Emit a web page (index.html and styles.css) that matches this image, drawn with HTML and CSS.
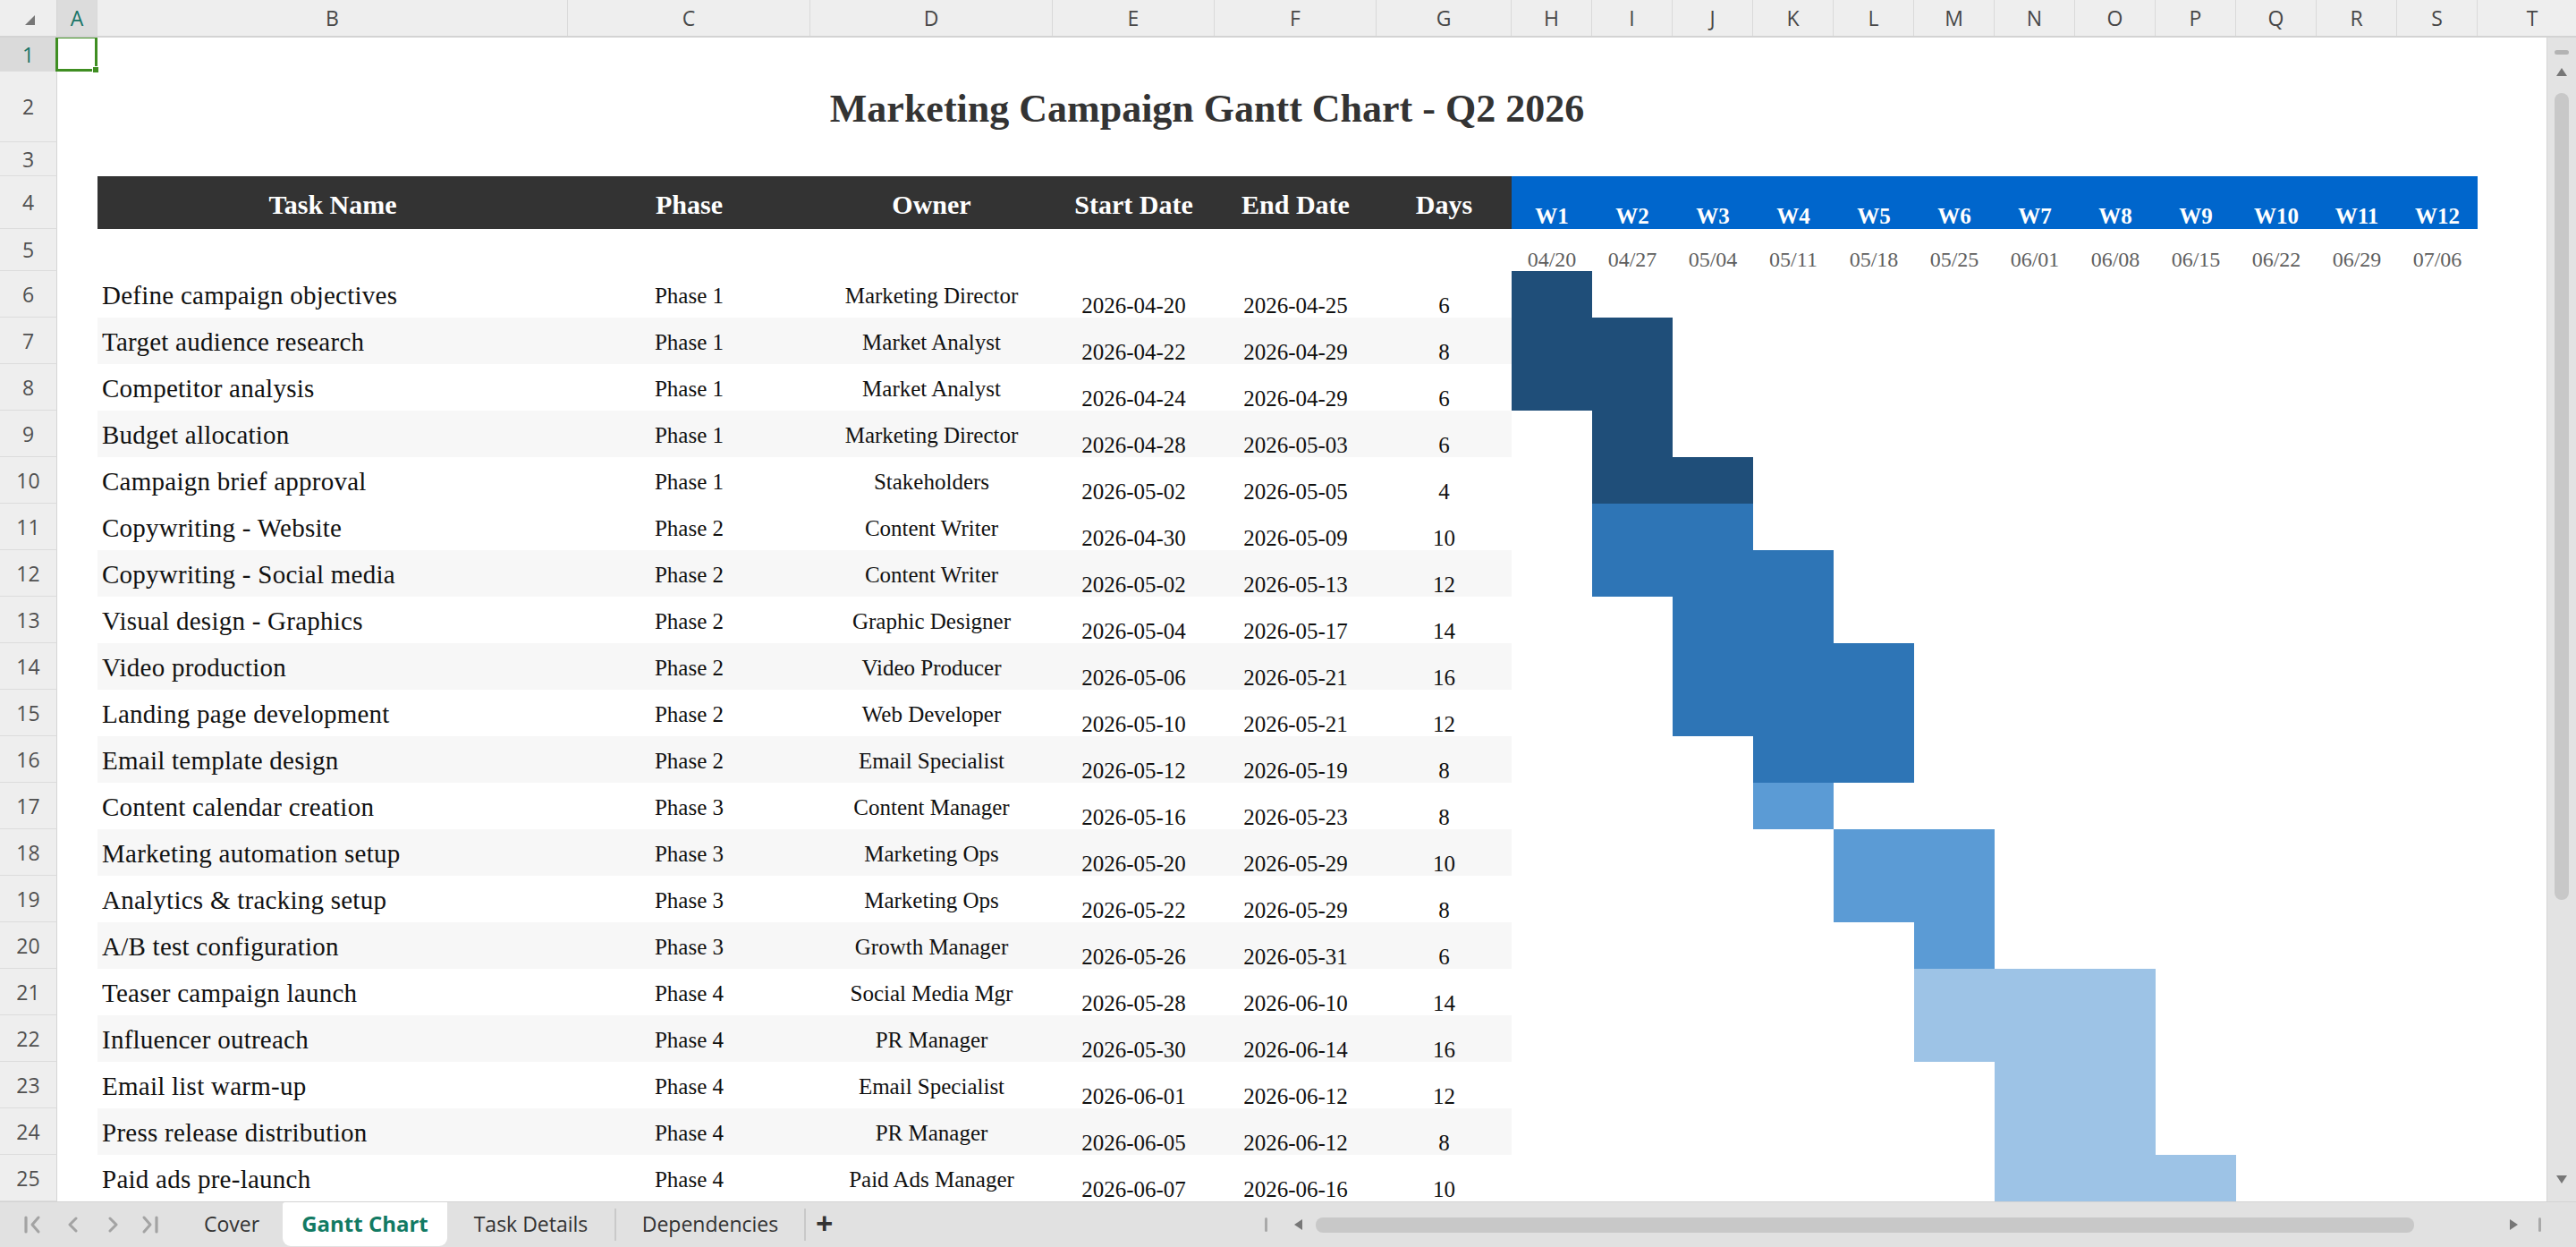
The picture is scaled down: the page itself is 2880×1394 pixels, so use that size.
FILE: index.html
```html
<!DOCTYPE html>
<html lang="en">
<head>
<meta charset="utf-8">
<title>Marketing Campaign Gantt Chart - Q2 2026</title>
<link rel="stylesheet" href="styles.css">
</head>
<body>
<div class="app">
  <div class="colhdr">
    <div class="corner"><span class="corner-tri"></span></div>
    <div class="ch active">A</div>
    <div class="ch">B</div>
    <div class="ch">C</div>
    <div class="ch">D</div>
    <div class="ch">E</div>
    <div class="ch">F</div>
    <div class="ch">G</div>
    <div class="ch">H</div>
    <div class="ch">I</div>
    <div class="ch">J</div>
    <div class="ch">K</div>
    <div class="ch">L</div>
    <div class="ch">M</div>
    <div class="ch">N</div>
    <div class="ch">O</div>
    <div class="ch">P</div>
    <div class="ch">Q</div>
    <div class="ch">R</div>
    <div class="ch">S</div>
    <div class="ch last">T</div>
  </div>

  <div class="main">
    <div class="sheet">
      <div class="row r1">
        <div class="rh active">1</div>
        <div class="sel"></div>
      </div>
      <div class="row r2">
        <div class="rh">2</div>
        <div class="title">Marketing Campaign Gantt Chart - Q2 2026</div>
      </div>
      <div class="row r3">
        <div class="rh">3</div>
      </div>
      <div class="row r4">
        <div class="rh">4</div>
        <div class="hd c3">Task Name</div>
        <div class="hd c4">Phase</div>
        <div class="hd c5">Owner</div>
        <div class="hd c6">Start Date</div>
        <div class="hd c7">End Date</div>
        <div class="hd c8">Days</div>
        <div class="wk c9">W1</div>
        <div class="wk c10">W2</div>
        <div class="wk c11">W3</div>
        <div class="wk c12">W4</div>
        <div class="wk c13">W5</div>
        <div class="wk c14">W6</div>
        <div class="wk c15">W7</div>
        <div class="wk c16">W8</div>
        <div class="wk c17">W9</div>
        <div class="wk c18">W10</div>
        <div class="wk c19">W11</div>
        <div class="wk c20">W12</div>
      </div>
      <div class="row r5">
        <div class="rh">5</div>
        <div class="wd c9">04/20</div>
        <div class="wd c10">04/27</div>
        <div class="wd c11">05/04</div>
        <div class="wd c12">05/11</div>
        <div class="wd c13">05/18</div>
        <div class="wd c14">05/25</div>
        <div class="wd c15">06/01</div>
        <div class="wd c16">06/08</div>
        <div class="wd c17">06/15</div>
        <div class="wd c18">06/22</div>
        <div class="wd c19">06/29</div>
        <div class="wd c20">07/06</div>
      </div>

      <div class="row task">
        <div class="rh">6</div>
        <div class="c name">Define campaign objectives</div>
        <div class="c phase">Phase 1</div>
        <div class="c owner">Marketing Director</div>
        <div class="c start">2026-04-20</div>
        <div class="c end">2026-04-25</div>
        <div class="c days">6</div>
        <div class="bar p1" style="grid-column: 9 / 10"></div>
      </div>
      <div class="row task alt">
        <div class="rh">7</div>
        <div class="c name">Target audience research</div>
        <div class="c phase">Phase 1</div>
        <div class="c owner">Market Analyst</div>
        <div class="c start">2026-04-22</div>
        <div class="c end">2026-04-29</div>
        <div class="c days">8</div>
        <div class="bar p1" style="grid-column: 9 / 11"></div>
      </div>
      <div class="row task">
        <div class="rh">8</div>
        <div class="c name">Competitor analysis</div>
        <div class="c phase">Phase 1</div>
        <div class="c owner">Market Analyst</div>
        <div class="c start">2026-04-24</div>
        <div class="c end">2026-04-29</div>
        <div class="c days">6</div>
        <div class="bar p1" style="grid-column: 9 / 11"></div>
      </div>
      <div class="row task alt">
        <div class="rh">9</div>
        <div class="c name">Budget allocation</div>
        <div class="c phase">Phase 1</div>
        <div class="c owner">Marketing Director</div>
        <div class="c start">2026-04-28</div>
        <div class="c end">2026-05-03</div>
        <div class="c days">6</div>
        <div class="bar p1" style="grid-column: 10 / 11"></div>
      </div>
      <div class="row task">
        <div class="rh">10</div>
        <div class="c name">Campaign brief approval</div>
        <div class="c phase">Phase 1</div>
        <div class="c owner">Stakeholders</div>
        <div class="c start">2026-05-02</div>
        <div class="c end">2026-05-05</div>
        <div class="c days">4</div>
        <div class="bar p1" style="grid-column: 10 / 12"></div>
      </div>
      <div class="row task">
        <div class="rh">11</div>
        <div class="c name">Copywriting - Website</div>
        <div class="c phase">Phase 2</div>
        <div class="c owner">Content Writer</div>
        <div class="c start">2026-04-30</div>
        <div class="c end">2026-05-09</div>
        <div class="c days">10</div>
        <div class="bar p2" style="grid-column: 10 / 12"></div>
      </div>
      <div class="row task alt">
        <div class="rh">12</div>
        <div class="c name">Copywriting - Social media</div>
        <div class="c phase">Phase 2</div>
        <div class="c owner">Content Writer</div>
        <div class="c start">2026-05-02</div>
        <div class="c end">2026-05-13</div>
        <div class="c days">12</div>
        <div class="bar p2" style="grid-column: 10 / 13"></div>
      </div>
      <div class="row task">
        <div class="rh">13</div>
        <div class="c name">Visual design - Graphics</div>
        <div class="c phase">Phase 2</div>
        <div class="c owner">Graphic Designer</div>
        <div class="c start">2026-05-04</div>
        <div class="c end">2026-05-17</div>
        <div class="c days">14</div>
        <div class="bar p2" style="grid-column: 11 / 13"></div>
      </div>
      <div class="row task alt">
        <div class="rh">14</div>
        <div class="c name">Video production</div>
        <div class="c phase">Phase 2</div>
        <div class="c owner">Video Producer</div>
        <div class="c start">2026-05-06</div>
        <div class="c end">2026-05-21</div>
        <div class="c days">16</div>
        <div class="bar p2" style="grid-column: 11 / 14"></div>
      </div>
      <div class="row task">
        <div class="rh">15</div>
        <div class="c name">Landing page development</div>
        <div class="c phase">Phase 2</div>
        <div class="c owner">Web Developer</div>
        <div class="c start">2026-05-10</div>
        <div class="c end">2026-05-21</div>
        <div class="c days">12</div>
        <div class="bar p2" style="grid-column: 11 / 14"></div>
      </div>
      <div class="row task alt">
        <div class="rh">16</div>
        <div class="c name">Email template design</div>
        <div class="c phase">Phase 2</div>
        <div class="c owner">Email Specialist</div>
        <div class="c start">2026-05-12</div>
        <div class="c end">2026-05-19</div>
        <div class="c days">8</div>
        <div class="bar p2" style="grid-column: 12 / 14"></div>
      </div>
      <div class="row task">
        <div class="rh">17</div>
        <div class="c name">Content calendar creation</div>
        <div class="c phase">Phase 3</div>
        <div class="c owner">Content Manager</div>
        <div class="c start">2026-05-16</div>
        <div class="c end">2026-05-23</div>
        <div class="c days">8</div>
        <div class="bar p3" style="grid-column: 12 / 13"></div>
      </div>
      <div class="row task alt">
        <div class="rh">18</div>
        <div class="c name">Marketing automation setup</div>
        <div class="c phase">Phase 3</div>
        <div class="c owner">Marketing Ops</div>
        <div class="c start">2026-05-20</div>
        <div class="c end">2026-05-29</div>
        <div class="c days">10</div>
        <div class="bar p3" style="grid-column: 13 / 15"></div>
      </div>
      <div class="row task">
        <div class="rh">19</div>
        <div class="c name">Analytics &amp; tracking setup</div>
        <div class="c phase">Phase 3</div>
        <div class="c owner">Marketing Ops</div>
        <div class="c start">2026-05-22</div>
        <div class="c end">2026-05-29</div>
        <div class="c days">8</div>
        <div class="bar p3" style="grid-column: 13 / 15"></div>
      </div>
      <div class="row task alt">
        <div class="rh">20</div>
        <div class="c name">A/B test configuration</div>
        <div class="c phase">Phase 3</div>
        <div class="c owner">Growth Manager</div>
        <div class="c start">2026-05-26</div>
        <div class="c end">2026-05-31</div>
        <div class="c days">6</div>
        <div class="bar p3" style="grid-column: 14 / 15"></div>
      </div>
      <div class="row task">
        <div class="rh">21</div>
        <div class="c name">Teaser campaign launch</div>
        <div class="c phase">Phase 4</div>
        <div class="c owner">Social Media Mgr</div>
        <div class="c start">2026-05-28</div>
        <div class="c end">2026-06-10</div>
        <div class="c days">14</div>
        <div class="bar p4" style="grid-column: 14 / 17"></div>
      </div>
      <div class="row task alt">
        <div class="rh">22</div>
        <div class="c name">Influencer outreach</div>
        <div class="c phase">Phase 4</div>
        <div class="c owner">PR Manager</div>
        <div class="c start">2026-05-30</div>
        <div class="c end">2026-06-14</div>
        <div class="c days">16</div>
        <div class="bar p4" style="grid-column: 14 / 17"></div>
      </div>
      <div class="row task">
        <div class="rh">23</div>
        <div class="c name">Email list warm-up</div>
        <div class="c phase">Phase 4</div>
        <div class="c owner">Email Specialist</div>
        <div class="c start">2026-06-01</div>
        <div class="c end">2026-06-12</div>
        <div class="c days">12</div>
        <div class="bar p4" style="grid-column: 15 / 17"></div>
      </div>
      <div class="row task alt">
        <div class="rh">24</div>
        <div class="c name">Press release distribution</div>
        <div class="c phase">Phase 4</div>
        <div class="c owner">PR Manager</div>
        <div class="c start">2026-06-05</div>
        <div class="c end">2026-06-12</div>
        <div class="c days">8</div>
        <div class="bar p4" style="grid-column: 15 / 17"></div>
      </div>
      <div class="row task">
        <div class="rh">25</div>
        <div class="c name">Paid ads pre-launch</div>
        <div class="c phase">Phase 4</div>
        <div class="c owner">Paid Ads Manager</div>
        <div class="c start">2026-06-07</div>
        <div class="c end">2026-06-16</div>
        <div class="c days">10</div>
        <div class="bar p4" style="grid-column: 15 / 18"></div>
      </div>
    </div>

    <div class="vscroll">
      <span class="vdash"></span>
      <span class="tri-up"></span>
      <span class="vthumb"></span>
      <span class="vspace"></span>
      <span class="tri-down"></span>
    </div>
  </div>

  <div class="tabbar">
    <div class="tabs-area">
      <div class="nav">
        <svg class="nav-first" width="20" height="22" viewBox="0 0 20 22"><line x1="2" y1="3" x2="2" y2="19" stroke="#a3a3a3" stroke-width="3.2" stroke-linecap="round"/><polyline points="16,3 9,11 16,19" fill="none" stroke="#a3a3a3" stroke-width="3" stroke-linecap="round" stroke-linejoin="round"/></svg>
        <svg class="nav-prev" width="12" height="22" viewBox="0 0 12 22"><polyline points="10,4 3,11 10,18" fill="none" stroke="#a3a3a3" stroke-width="3" stroke-linecap="round" stroke-linejoin="round"/></svg>
        <svg class="nav-next" width="12" height="22" viewBox="0 0 12 22"><polyline points="2,4 9,11 2,18" fill="none" stroke="#a3a3a3" stroke-width="3" stroke-linecap="round" stroke-linejoin="round"/></svg>
        <svg class="nav-last" width="20" height="22" viewBox="0 0 20 22"><polyline points="3,3 10,11 3,19" fill="none" stroke="#a3a3a3" stroke-width="3" stroke-linecap="round" stroke-linejoin="round"/><line x1="17" y1="3" x2="17" y2="19" stroke="#a3a3a3" stroke-width="3.2" stroke-linecap="round"/></svg>
      </div>
      <div class="tab tab-cover">Cover</div>
      <div class="tab tab-active">Gantt Chart</div>
      <div class="tab tab-details">Task Details</div>
      <span class="tsep"></span>
      <div class="tab tab-deps">Dependencies</div>
      <span class="tsep"></span>
      <div class="tab-add">+</div>
    </div>
    <div class="hscroll">
      <span class="hdiv"></span>
      <span class="tri-left"></span>
      <span class="hthumb"></span>
      <span class="tri-right"></span>
      <span class="hdiv hdiv-end"></span>
    </div>
  </div>
</div>
</body>
</html>
```

FILE: styles.css
```css
* { box-sizing: border-box; }

html, body {
  margin: 0;
  padding: 0;
  background: #ffffff;
}

body {
  width: 2880px;
  height: 1394px;
  overflow: hidden;
  font-family: "Liberation Serif", "Times New Roman", serif;
  color: #111111;
}

.app {
  width: 2880px;
  height: 1394px;
  display: flex;
  flex-direction: column;
}

/* ---------- column header ---------- */
.colhdr {
  height: 42px;
  flex: 0 0 42px;
  display: grid;
  grid-template-columns: 64px 45px 526px 271px 271px 181px 181px 151px repeat(12, 90px) 122px;
  background: #eeeeee;
  border-bottom: 2px solid #d3d3d3;
  overflow: hidden;
  font-family: "Open Sans", "Noto Sans", sans-serif;
}

.colhdr .ch {
  display: flex;
  align-items: center;
  justify-content: center;
  font-size: 23px;
  color: #474747;
  border-right: 1px solid #d9d9d9;
}

.colhdr .ch.active {
  background: #dcdcdc;
  color: #177466;
}

.colhdr .ch.last {
  border-right: none;
}

.corner {
  position: relative;
  border-right: 1px solid #d4d4d4;
}

.corner-tri {
  position: absolute;
  left: 28px;
  top: 17px;
  width: 0;
  height: 0;
  border-style: solid;
  border-width: 0 0 11px 11px;
  border-color: transparent transparent #767676 transparent;
}

/* ---------- main area ---------- */
.main {
  flex: 1 1 auto;
  display: flex;
  min-height: 0;
}

.sheet {
  width: 2847px;
  flex: 0 0 2847px;
  overflow: hidden;
}

.row {
  display: grid;
  grid-template-columns: 64px 45px 526px 271px 271px 181px 181px 151px repeat(12, 90px) 1fr;
}

.row > * {
  grid-row: 1;
}

.r1 { height: 38px; }
.r2 { height: 79px; }
.r3 { height: 38px; }
.r4 { height: 59px; }
.r5 { height: 47px; }
.task { height: 52px; }

.rh {
  grid-column: 1;
  display: flex;
  align-items: center;
  justify-content: center;
  background: #eeeeee;
  border-right: 1px solid #d4d4d4;
  border-bottom: 1px solid #dcdcdc;
  font-family: "Open Sans", "Noto Sans", sans-serif;
  font-size: 23px;
  color: #505050;
}

.rh.active {
  background: #dadada;
  color: #177466;
}

/* selected cell A1 */
.sel {
  grid-column: 2;
  position: relative;
}

.sel::before {
  content: "";
  position: absolute;
  left: -2px;
  top: -2px;
  right: 0;
  bottom: 0;
  border: 3px solid #3f8e22;
}

.sel::after {
  content: "";
  position: absolute;
  right: -2px;
  bottom: -2px;
  width: 6px;
  height: 6px;
  background: #3f8e22;
  border: 1px solid #ffffff;
  box-sizing: content-box;
}

/* title */
.title {
  grid-column: 3 / 19;
  display: flex;
  align-items: center;
  justify-content: center;
  padding-top: 4px;
  font-weight: bold;
  font-size: 44px;
  color: #333333;
}

/* column positions */
.c3 { grid-column: 3; }
.c4 { grid-column: 4; }
.c5 { grid-column: 5; }
.c6 { grid-column: 6; }
.c7 { grid-column: 7; }
.c8 { grid-column: 8; }
.c9 { grid-column: 9; }
.c10 { grid-column: 10; }
.c11 { grid-column: 11; }
.c12 { grid-column: 12; }
.c13 { grid-column: 13; }
.c14 { grid-column: 14; }
.c15 { grid-column: 15; }
.c16 { grid-column: 16; }
.c17 { grid-column: 17; }
.c18 { grid-column: 18; }
.c19 { grid-column: 19; }
.c20 { grid-column: 20; }

/* header row */
.hd {
  background: #333333;
  color: #ffffff;
  font-weight: bold;
  font-size: 30px;
  display: flex;
  align-items: center;
  justify-content: center;
  padding-top: 4px;
}

.wk {
  background: #0066cc;
  color: #ffffff;
  font-weight: bold;
  font-size: 25px;
  line-height: 1;
  display: flex;
  align-items: flex-end;
  justify-content: center;
  padding-bottom: 2px;
}

.wd {
  color: #5f5f5f;
  font-size: 24px;
  line-height: 1;
  display: flex;
  align-items: flex-end;
  justify-content: center;
  padding-bottom: 1px;
}

/* task rows */
.c {
  display: flex;
  white-space: nowrap;
  color: #111111;
}

.alt .c {
  background: #f7f7f7;
}

.name {
  grid-column: 3;
  align-items: center;
  padding-left: 5px;
  padding-top: 3px;
  font-size: 29px;
  letter-spacing: 0.25px;
}

.phase {
  grid-column: 4;
  align-items: center;
  justify-content: center;
  padding-top: 3px;
  font-size: 25px;
}

.owner {
  grid-column: 5;
  align-items: center;
  justify-content: center;
  padding-top: 3px;
  font-size: 25px;
}

.start, .end, .days {
  align-items: flex-end;
  justify-content: center;
  font-size: 25px;
  line-height: 1;
  padding-bottom: 1px;
}

.start { grid-column: 6; }
.end { grid-column: 7; }
.days { grid-column: 8; }

.bar.p1 { background: #1f4e79; }
.bar.p2 { background: #2e75b6; }
.bar.p3 { background: #5b9bd5; }
.bar.p4 { background: #9dc3e6; }

/* ---------- vertical scrollbar ---------- */
.vscroll {
  flex: 0 0 33px;
  width: 33px;
  background: #e3e3e3;
  border-left: 1px solid #d6d6d6;
  display: flex;
  flex-direction: column;
  align-items: center;
}

.vdash {
  margin-top: 14px;
  width: 16px;
  height: 5px;
  border-radius: 3px;
  background: #b3b3b3;
}

.tri-up {
  margin-top: 15px;
  width: 0;
  height: 0;
  border-style: solid;
  border-width: 0 6px 9px 6px;
  border-color: transparent transparent #777777 transparent;
}

.vthumb {
  margin-top: 19px;
  width: 16px;
  height: 902px;
  border-radius: 8px;
  background: #c8c8c8;
}

.vspace {
  flex: 1 1 auto;
}

.tri-down {
  margin-bottom: 20px;
  width: 0;
  height: 0;
  border-style: solid;
  border-width: 9px 6px 0 6px;
  border-color: #777777 transparent transparent transparent;
}

/* ---------- tab bar ---------- */
.tabbar {
  flex: 0 0 51px;
  height: 51px;
  background: #e1e1e1;
  border-top: 1px solid #d3d3d3;
  display: flex;
  align-items: stretch;
  font-family: "Open Sans", "Noto Sans", sans-serif;
}

.tabs-area {
  width: 1414px;
  flex: 0 0 1414px;
  display: flex;
  align-items: center;
}

.nav {
  width: 202px;
  flex: 0 0 202px;
  display: flex;
  align-items: center;
  padding-left: 27px;
}

.nav svg { display: block; }
.nav-prev { margin-left: 28px; }
.nav-next { margin-left: 34px; }
.nav-last { margin-left: 25px; }

.tab {
  height: 100%;
  display: flex;
  align-items: center;
  justify-content: center;
  font-size: 23px;
  color: #333333;
  padding-bottom: 2px;
}

.tab-cover { width: 114px; }
.tab-details { width: 187px; }
.tab-deps { width: 210px; }

.tab-active {
  width: 184px;
  height: 49px;
  align-self: flex-start;
  background: #ffffff;
  border-radius: 3px 0 9px 9px;
  color: #127a63;
  font-weight: bold;
  font-size: 24px;
}

.tsep {
  width: 2px;
  height: 36px;
  background: #c9c9c9;
}

.tab-add {
  margin-left: 11px;
  font-size: 34px;
  font-weight: bold;
  color: #333333;
  line-height: 1;
  padding-bottom: 4px;
}

.hscroll {
  flex: 1 1 auto;
  display: flex;
  align-items: center;
}

.hdiv {
  width: 3px;
  height: 16px;
  border-radius: 2px;
  background: #a9a9a9;
}

.tri-left {
  margin-left: 30px;
  width: 0;
  height: 0;
  border-style: solid;
  border-width: 6px 9px 6px 0;
  border-color: transparent #777777 transparent transparent;
}

.hthumb {
  margin-left: 15px;
  width: 1228px;
  height: 17px;
  border-radius: 8px;
  background: #c8c8c8;
}

.tri-right {
  margin-left: 107px;
  width: 0;
  height: 0;
  border-style: solid;
  border-width: 6px 0 6px 9px;
  border-color: transparent transparent transparent #777777;
}

.hdiv-end {
  margin-left: 23px;
}
```
